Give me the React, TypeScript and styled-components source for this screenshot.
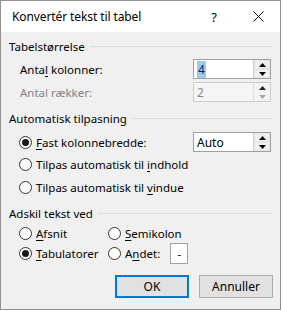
import React from "react";
import styled, { createGlobalStyle } from "styled-components";

const Global = createGlobalStyle`
  html, body { margin: 0; padding: 0; background: #ffffff; }
  body { font-family: "Noto Sans", "Liberation Sans", sans-serif; font-size: 11.5px; color: #000; }
  * { box-sizing: border-box; }
`;

const Window = styled.div`
  width: 281px;
  height: 310px;
  border: 1px solid #8f8f8f;
  background: #f0f0f0;
  display: flex;
  flex-direction: column;
`;

const TitleBar = styled.div`
  height: 31px;
  background: #ffffff;
  display: flex;
  align-items: center;
  padding-left: 11px;
`;

const Title = styled.div`
  flex: 1;
  font-size: 12px;
  letter-spacing: -0.1px;
`;

const TitleButton = styled.div`
  width: 44px;
  height: 31px;
  display: flex;
  align-items: center;
  justify-content: center;
  font-size: 13px;
`;

const Content = styled.div`
  flex: 1;
  padding: 6px 9px 0 8px;
  display: flex;
  flex-direction: column;
`;

const Header = styled.div<{ $mt: number }>`
  display: flex;
  align-items: center;
  gap: 5px;
  height: 16px;
  margin-top: ${(p) => p.$mt}px;
  margin-right: -2px;
  &::after {
    content: "";
    flex: 1;
    height: 1px;
    background: #dcdcdc;
  }
`;

const Row = styled.div<{ $mt: number; $disabled?: boolean }>`
  display: flex;
  align-items: center;
  height: 20px;
  margin-top: ${(p) => p.$mt}px;
  padding-left: 10px;
  color: ${(p) => (p.$disabled ? "#838383" : "#000")};
`;

const Label = styled.span`
  flex: 1;
  padding-left: 1px;
`;

const U = styled.span`
  text-decoration: underline;
  text-underline-offset: 2px;
`;

const Spin = styled.div<{ $disabled?: boolean }>`
  width: 78px;
  height: 20px;
  border: 1px solid ${(p) => (p.$disabled ? "#cccccc" : "#a0a0a0")};
  background: ${(p) => (p.$disabled ? "#f5f5f5" : "#ffffff")};
  display: flex;
`;

const SpinText = styled.div<{ $disabled?: boolean }>`
  flex: 1;
  padding-left: 3px;
  display: flex;
  align-items: center;
  font-size: 12px;
  color: ${(p) => (p.$disabled ? "#8a8a8a" : "#000")};
`;

const Selected = styled.span`
  background: #9ccbf2;
  color: #0a1e5a;
  padding: 0 1px;
`;

const SpinButtons = styled.div<{ $disabled?: boolean }>`
  width: 17px;
  display: flex;
  flex-direction: column;
  border-left: 1px solid ${(p) => (p.$disabled ? "#e3e3e3" : "#d0d0d0")};
`;

const SpinBtn = styled.div<{ $disabled?: boolean }>`
  flex: 1;
  display: flex;
  align-items: center;
  justify-content: center;
  background: ${(p) => (p.$disabled ? "#f4f4f4" : "#f0f0f0")};
  border: 1px solid ${(p) => (p.$disabled ? "#f4f4f4" : "#e6e6e6")};
`;

const Arrow = ({ up, color }: { up?: boolean; color: string }) => (
  <svg width="7" height="4" viewBox="0 0 7 4">
    {up ? <polygon points="0,4 7,4 3.5,0" fill={color} /> : <polygon points="0,0 7,0 3.5,4" fill={color} />}
  </svg>
);

const SpinBox = ({ children, disabled }: { children: React.ReactNode; disabled?: boolean }) => (
  <Spin $disabled={disabled}>
    <SpinText $disabled={disabled}>{children}</SpinText>
    <SpinButtons $disabled={disabled}>
      <SpinBtn $disabled={disabled}>
        <Arrow up color={disabled ? "#222" : "#000"} />
      </SpinBtn>
      <SpinBtn $disabled={disabled}>
        <Arrow color={disabled ? "#a8a8a8" : "#000"} />
      </SpinBtn>
    </SpinButtons>
  </Spin>
);

const RadioRow = styled.div<{ $mt: number }>`
  display: flex;
  align-items: center;
  height: 20px;
  margin-top: ${(p) => p.$mt}px;
  padding-left: 10px;
`;

const RadioItem = styled.div<{ $w?: number }>`
  display: flex;
  align-items: center;
  gap: 4px;
  width: ${(p) => (p.$w ? `${p.$w}px` : "auto")};
  flex: ${(p) => (p.$w ? "none" : "1")};
`;

const Circle = styled.span<{ $checked?: boolean }>`
  width: 13px;
  height: 13px;
  border-radius: 50%;
  border: 1px solid #333333;
  background: #ffffff;
  display: flex;
  align-items: center;
  justify-content: center;
  flex: none;
  &::after {
    content: "";
    width: 7px;
    height: 7px;
    border-radius: 50%;
    background: ${(p) => (p.$checked ? "#1a1a1a" : "transparent")};
  }
`;

const SmallBox = styled.div`
  width: 18px;
  height: 21px;
  border: 1px solid #a0a0a0;
  background: #ffffff;
  display: flex;
  align-items: center;
  justify-content: center;
  margin-left: 6px;
`;

const Buttons = styled.div`
  display: flex;
  justify-content: flex-end;
  gap: 10px;
  margin-top: 12px;
  margin-right: -2px;
`;

const Button = styled.div<{ $default?: boolean }>`
  width: 74px;
  height: 23px;
  background: #e1e1e1;
  border: ${(p) => (p.$default ? "2px solid #0078d7" : "1px solid #adadad")};
  display: flex;
  align-items: center;
  justify-content: center;
  font-size: 12px;
`;

export default function App() {
  return (
    <>
      <Global />
      <Window>
        <TitleBar>
          <Title>Konvertér tekst til tabel</Title>
          <TitleButton>?</TitleButton>
          <TitleButton>
            <svg width="11" height="11" viewBox="0 0 11 11">
              <path d="M0.5 0.5 L10.5 10.5 M10.5 0.5 L0.5 10.5" stroke="#111" strokeWidth="1" />
            </svg>
          </TitleButton>
        </TitleBar>
        <Content>
          <Header $mt={0}>Tabelstørrelse</Header>
          <Row $mt={5}>
            <Label>
              Anta<U>l</U> kolonner:
            </Label>
            <SpinBox>
              <Selected>4</Selected>
            </SpinBox>
          </Row>
          <Row $mt={3} $disabled>
            <Label>Antal rækker:</Label>
            <SpinBox disabled>2</SpinBox>
          </Row>
          <Header $mt={8}>Automatisk tilpasning</Header>
          <RadioRow $mt={6}>
            <RadioItem>
              <Circle $checked />
              <span>
                <U>F</U>ast kolonnebredde:
              </span>
            </RadioItem>
            <SpinBox>Auto</SpinBox>
          </RadioRow>
          <RadioRow $mt={2}>
            <RadioItem>
              <Circle />
              <span>
                Tilpas automatisk til <U>i</U>ndhold
              </span>
            </RadioItem>
          </RadioRow>
          <RadioRow $mt={3}>
            <RadioItem>
              <Circle />
              <span>
                Tilpas automatisk til <U>v</U>indue
              </span>
            </RadioItem>
          </RadioRow>
          <Header $mt={8}>Adskil tekst ved</Header>
          <RadioRow $mt={2}>
            <RadioItem $w={89}>
              <Circle />
              <span>
                <U>A</U>fsnit
              </span>
            </RadioItem>
            <RadioItem>
              <Circle />
              <span>
                <U>S</U>emikolon
              </span>
            </RadioItem>
          </RadioRow>
          <RadioRow $mt={0}>
            <RadioItem $w={89}>
              <Circle $checked />
              <span>
                <U>T</U>abulatorer
              </span>
            </RadioItem>
            <RadioItem>
              <Circle />
              <span>
                A<U>n</U>det:
              </span>
              <SmallBox>-</SmallBox>
            </RadioItem>
          </RadioRow>
          <Buttons>
            <Button $default>OK</Button>
            <Button>Annuller</Button>
          </Buttons>
        </Content>
      </Window>
    </>
  );
}
